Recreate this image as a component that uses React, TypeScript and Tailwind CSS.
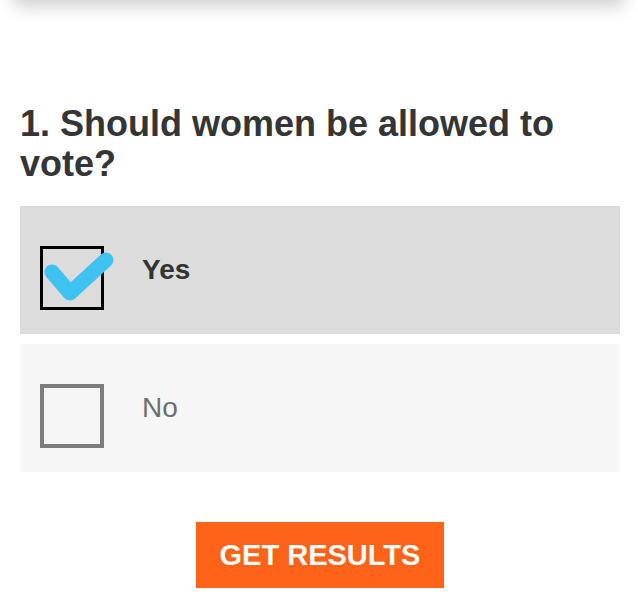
import React from "react";

export default function App() {
  return (
    <div className="flex flex-col min-h-[615px] bg-white overflow-hidden" style={{ fontFamily: '"Liberation Sans", Arial, Helvetica, sans-serif' }}>
      <div className="-mt-[20px] h-[20px] mx-[18px] bg-white shadow-[0_2px_18px_4px_rgba(0,0,0,0.2)]" />
      <div className="pl-[20px] pr-[18px] pt-[104px] flex flex-col">
        <h1 className="text-[36px] leading-[40px] font-bold text-[#353535] m-0">
          1. Should women be allowed to vote?
        </h1>
        <div className="mt-[22px] flex flex-col gap-[10px]">
          <div className="h-[128px] bg-[#dcdcdc] flex items-center px-[20px]">
            <div className="relative mt-[16px] w-[64px] h-[64px] border-[3px] border-black shrink-0">
              <svg className="absolute -left-[3px] -top-[3px] overflow-visible" width="64" height="64" viewBox="0 0 64 64">
                <polyline points="12,26 30,47 66,14" fill="none" stroke="#3ec3f0" strokeWidth="15" strokeLinecap="round" strokeLinejoin="round" />
              </svg>
            </div>
            <span className="ml-[38px] text-[28px] leading-[32px] font-bold text-[#333]">Yes</span>
          </div>
          <div className="h-[128px] bg-[#f6f6f6] flex items-center px-[20px]">
            <div className="mt-[16px] w-[64px] h-[64px] border-[4px] border-[#7c7c7c] shrink-0" />
            <span className="ml-[38px] text-[28px] leading-[32px] text-[#6e6e6e]">No</span>
          </div>
        </div>
        <div className="mt-[50px] flex justify-center">
          <button className="w-[248px] h-[66px] bg-[#ff6219] text-white text-[29px] font-bold leading-none">
            GET RESULTS
          </button>
        </div>
      </div>
    </div>
  );
}
